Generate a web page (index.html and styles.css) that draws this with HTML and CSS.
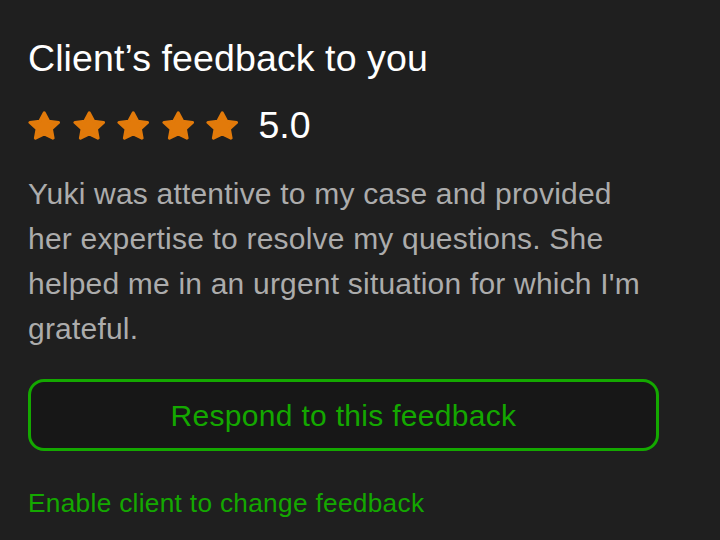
FILE: index.html
```html
<!DOCTYPE html>
<html lang="en">
<head>
<meta charset="utf-8">
<link rel="stylesheet" href="styles.css">
</head>
<body>
<div class="card">
  <h1 class="title">Client’s feedback to you</h1>
  <div class="rating">
    <div class="stars">
      <svg class="star" viewBox="0.6 0.6 22.8 21.8" preserveAspectRatio="none"><polygon points="12,2 15.09,8.26 22,9.27 17,14.14 18.18,21.02 12,17.77 5.82,21.02 7,14.14 2,9.27 8.91,8.26"/></svg>
      <svg class="star" viewBox="0.6 0.6 22.8 21.8" preserveAspectRatio="none"><polygon points="12,2 15.09,8.26 22,9.27 17,14.14 18.18,21.02 12,17.77 5.82,21.02 7,14.14 2,9.27 8.91,8.26"/></svg>
      <svg class="star" viewBox="0.6 0.6 22.8 21.8" preserveAspectRatio="none"><polygon points="12,2 15.09,8.26 22,9.27 17,14.14 18.18,21.02 12,17.77 5.82,21.02 7,14.14 2,9.27 8.91,8.26"/></svg>
      <svg class="star" viewBox="0.6 0.6 22.8 21.8" preserveAspectRatio="none"><polygon points="12,2 15.09,8.26 22,9.27 17,14.14 18.18,21.02 12,17.77 5.82,21.02 7,14.14 2,9.27 8.91,8.26"/></svg>
      <svg class="star" viewBox="0.6 0.6 22.8 21.8" preserveAspectRatio="none"><polygon points="12,2 15.09,8.26 22,9.27 17,14.14 18.18,21.02 12,17.77 5.82,21.02 7,14.14 2,9.27 8.91,8.26"/></svg>
    </div>
    <span class="score">5.0</span>
  </div>
  <p class="comment">Yuki was attentive to my case and provided her expertise to resolve my questions. She helped me in an urgent situation for which I'm grateful.</p>
  <button class="respond">Respond to this feedback</button>
  <a class="enable" href="#">Enable client to change feedback</a>
</div>
</body>
</html>
```
FILE: styles.css
```css
html, body {
  margin: 0;
  padding: 0;
  background: #1f1f1f;
}
body {
  font-family: "Liberation Sans", Arial, sans-serif;
  width: 720px;
  height: 540px;
  overflow: hidden;
}
.card {
  padding: 36px 0 0 28px;
  width: 631px;
  display: flex;
  flex-direction: column;
  align-items: flex-start;
}
.title {
  margin: 0;
  font-size: 37.5px;
  line-height: 45px;
  font-weight: 400;
  color: #ffffff;
  letter-spacing: 0.1px;
}
.rating {
  display: flex;
  align-items: flex-end;
  gap: 20px;
  margin-top: 29px;
  height: 30px;
}
.stars {
  display: flex;
  gap: 12px;
}
.star {
  width: 32.5px;
  height: 29px;
  display: block;
}
.star polygon {
  fill: #e27a0a;
  stroke: #e27a0a;
  stroke-width: 2.2;
  stroke-linejoin: round;
}
.score {
  font-size: 37.5px;
  line-height: 30px;
  height: 30px;
  color: #ffffff;
}
.comment {
  margin: 31px 0 0 0;
  width: 622px;
  font-size: 30px;
  line-height: 45px;
  letter-spacing: 0.2px;
  color: #acacac;
}
.respond {
  margin-top: 28px;
  width: 631px;
  height: 72px;
  box-sizing: border-box;
  border: 3px solid #14a800;
  border-radius: 16px;
  background: #171717;
  color: #14a800;
  font-family: "Liberation Sans", Arial, sans-serif;
  font-size: 30px;
  letter-spacing: 0.3px;
  padding: 2px 0 0 0;
  display: flex;
  align-items: center;
  justify-content: center;
}
.enable {
  margin-top: 33px;
  font-size: 26.25px;
  line-height: 39px;
  letter-spacing: 0.3px;
  color: #14a800;
  text-decoration: none;
}
```
